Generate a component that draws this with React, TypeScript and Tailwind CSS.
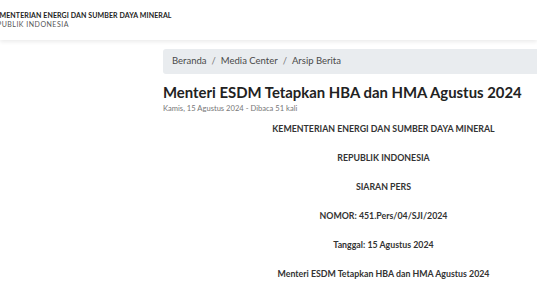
export default function App() {
  const lines = [
    'KEMENTERIAN ENERGI DAN SUMBER DAYA MINERAL',
    'REPUBLIK INDONESIA',
    'SIARAN PERS',
    'NOMOR: 451.Pers/04/SJI/2024',
    'Tanggal: 15 Agustus 2024',
    'Menteri ESDM Tetapkan HBA dan HMA Agustus 2024',
  ];

  return (
    <div className="w-[537px] h-[292px] overflow-hidden bg-white" style={{ fontFamily: 'Lato, "Open Sans", sans-serif' }}>
      {/* header */}
      <header className="h-[40px] bg-white shadow-[0_2px_4px_rgba(0,0,0,0.08)] relative z-10 flex flex-col justify-center">
        <div className="-ml-[9.5px] text-[7px] font-bold text-[#222] leading-[9px] tracking-[0.1px] whitespace-nowrap">KEMENTERIAN ENERGI DAN SUMBER DAYA MINERAL</div>
        <div className="-ml-[12.5px] text-[7px] text-[#555] leading-[9px] tracking-[0.5px] whitespace-nowrap">REPUBLIK INDONESIA</div>
      </header>

      <main className="flex">
        <aside className="w-[163px] shrink-0" />
        <section className="w-[441px] shrink-0 pt-[9px]">
          {/* breadcrumb */}
          <nav className="h-[25px] bg-[#e9ecef] rounded-[3px] flex items-center px-[9px] text-[9.5px] text-[#4a4a4a]">
            <span>Beranda</span>
            <span className="px-[5px] text-[#777]">/</span>
            <span>Media Center</span>
            <span className="px-[5px] text-[#777]">/</span>
            <span>Arsip Berita</span>
          </nav>

          <h1 className="mt-[7px] text-[14.9px] font-bold text-[#222] leading-[22px] whitespace-nowrap">
            Menteri ESDM Tetapkan HBA dan HMA Agustus 2024
          </h1>
          <p className="mt-[0px] text-[7.6px] text-[#777] leading-[10px]">Kamis, 15 Agustus 2024 - Dibaca 51 kali</p>

          <div className="mt-[10px] flex flex-col items-center gap-[17px]">
            {lines.map((line) => (
              <p key={line} className="text-[8.8px] font-bold text-[#333] leading-[12px] text-center">
                {line}
              </p>
            ))}
          </div>
        </section>
      </main>
    </div>
  );
}
